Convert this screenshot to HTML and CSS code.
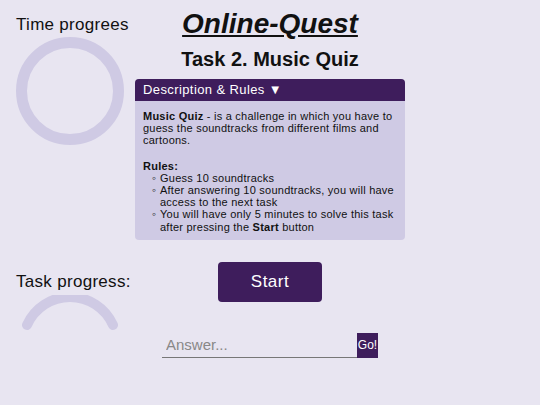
FILE: index.html
```html
<!DOCTYPE html>
<html>
	<head>
	<meta charset="utf-8">
	<link rel="stylesheet" href="styles.css">
	</head>

	<body>
		<div class="page">

			<div class="side">
				<div class="label">Time progrees</div>
				<svg class="timer" width="108" height="108" viewBox="0 0 108 108">
					<circle cx="54" cy="54" r="48.5" fill="none" stroke="#cfcae4" stroke-width="11"/>
				</svg>

				<div class="label task-label">Task progress:</div>
				<svg class="gauge" width="108" height="40" viewBox="0 0 108 40">
					<path d="M11 30 A47 47 0 0 1 97 30" fill="none" stroke="#cfcae4" stroke-width="10" stroke-linecap="round"/>
				</svg>
			</div>

			<div class="main">
				<h1 class="title">Online-Quest</h1>
				<h2 class="subtitle">Task 2. Music Quiz</h2>

				<div class="panel">
					<div class="panel-head">Description &amp; Rules &#9660;</div>
					<div class="panel-body">
						<p><b>Music Quiz</b> - is a challenge in which you have to guess the soundtracks from different films and cartoons.</p>
						<b>Rules:</b>
						<ul>
							<li>Guess 10 soundtracks</li>
							<li>After answering 10 soundtracks, you will have access to the next task</li>
							<li>You will have only 5 minutes to solve this task after pressing the <b>Start</b> button</li>
						</ul>
					</div>
				</div>

				<button class="start">Start</button>

				<form class="answer">
					<input type="text" placeholder="Answer...">
					<button type="button" class="go">Go!</button>
				</form>
			</div>

		</div>
	</body>
</html>
```

FILE: styles.css
```css
body, html {
	height: 100%;
	min-height: 100%;
}

body {
	margin: 0;
	padding: 0;
	background: #e8e5f1;
	font-family: "Liberation Sans", Arial, sans-serif;
	color: #111;
}

.page {
	display: flex;
}

.side {
	width: 135px;
	padding: 15px 0 0 16px;
	box-sizing: border-box;
	display: flex;
	flex-direction: column;
}

.label {
	font-size: 17px;
	line-height: 20px;
	letter-spacing: 0.3px;
}

.timer {
	display: block;
	margin-top: 2px;
}

.task-label {
	margin-top: 127px;
}

.gauge {
	display: block;
	margin-top: 3px;
	margin-left: 0;
}

.main {
	width: 270px;
	display: flex;
	flex-direction: column;
	align-items: center;
}

.title {
	margin: 7px 0 0;
	font-size: 28px;
	line-height: 34px;
	font-style: italic;
	text-decoration: underline;
}

.subtitle {
	margin: 6px 0 0;
	font-size: 20px;
	line-height: 24px;
}

.panel {
	align-self: stretch;
	margin-top: 8px;
	border-radius: 4px;
	overflow: hidden;
	background: #cfcae4;
}

.panel-head {
	background: #3e1d5c;
	color: #fff;
	font-size: 13px;
	line-height: 22px;
	padding: 0 8px;
	letter-spacing: 0.4px;
}

.panel-body {
	padding: 9px 8px 7px;
	font-size: 11px;
	line-height: 12.2px;
	letter-spacing: 0.24px;
	color: #111;
}

.panel-body p {
	margin: 0 0 13px;
}

.panel-body ul {
	margin: 0;
	padding-left: 17px;
	list-style: "\25E6\00a0";
}

.panel-body li::marker {
	font-size: 12px;
}

.start {
	margin-top: 22px;
	width: 104px;
	height: 40px;
	border: 0;
	border-radius: 4px;
	background: #3e1d5c;
	color: #fff;
	font-family: "Liberation Sans", Arial, sans-serif;
	font-size: 17px;
	letter-spacing: 0.5px;
}

.answer {
	display: flex;
	margin: 31px 0 0;
}

.answer input {
	width: 195px;
	height: 25px;
	box-sizing: border-box;
	border: 0;
	border-bottom: 1px solid #777;
	background: transparent;
	padding: 0 4px;
	font-family: "Liberation Sans", Arial, sans-serif;
	font-size: 15px;
	outline: none;
}

.answer input::placeholder {
	color: #888;
}

.go {
	width: 21px;
	height: 25px;
	padding: 0;
	border: 0;
	background: #3e1d5c;
	color: #fff;
	font-family: "Liberation Sans", Arial, sans-serif;
	font-size: 12px;
}
```
